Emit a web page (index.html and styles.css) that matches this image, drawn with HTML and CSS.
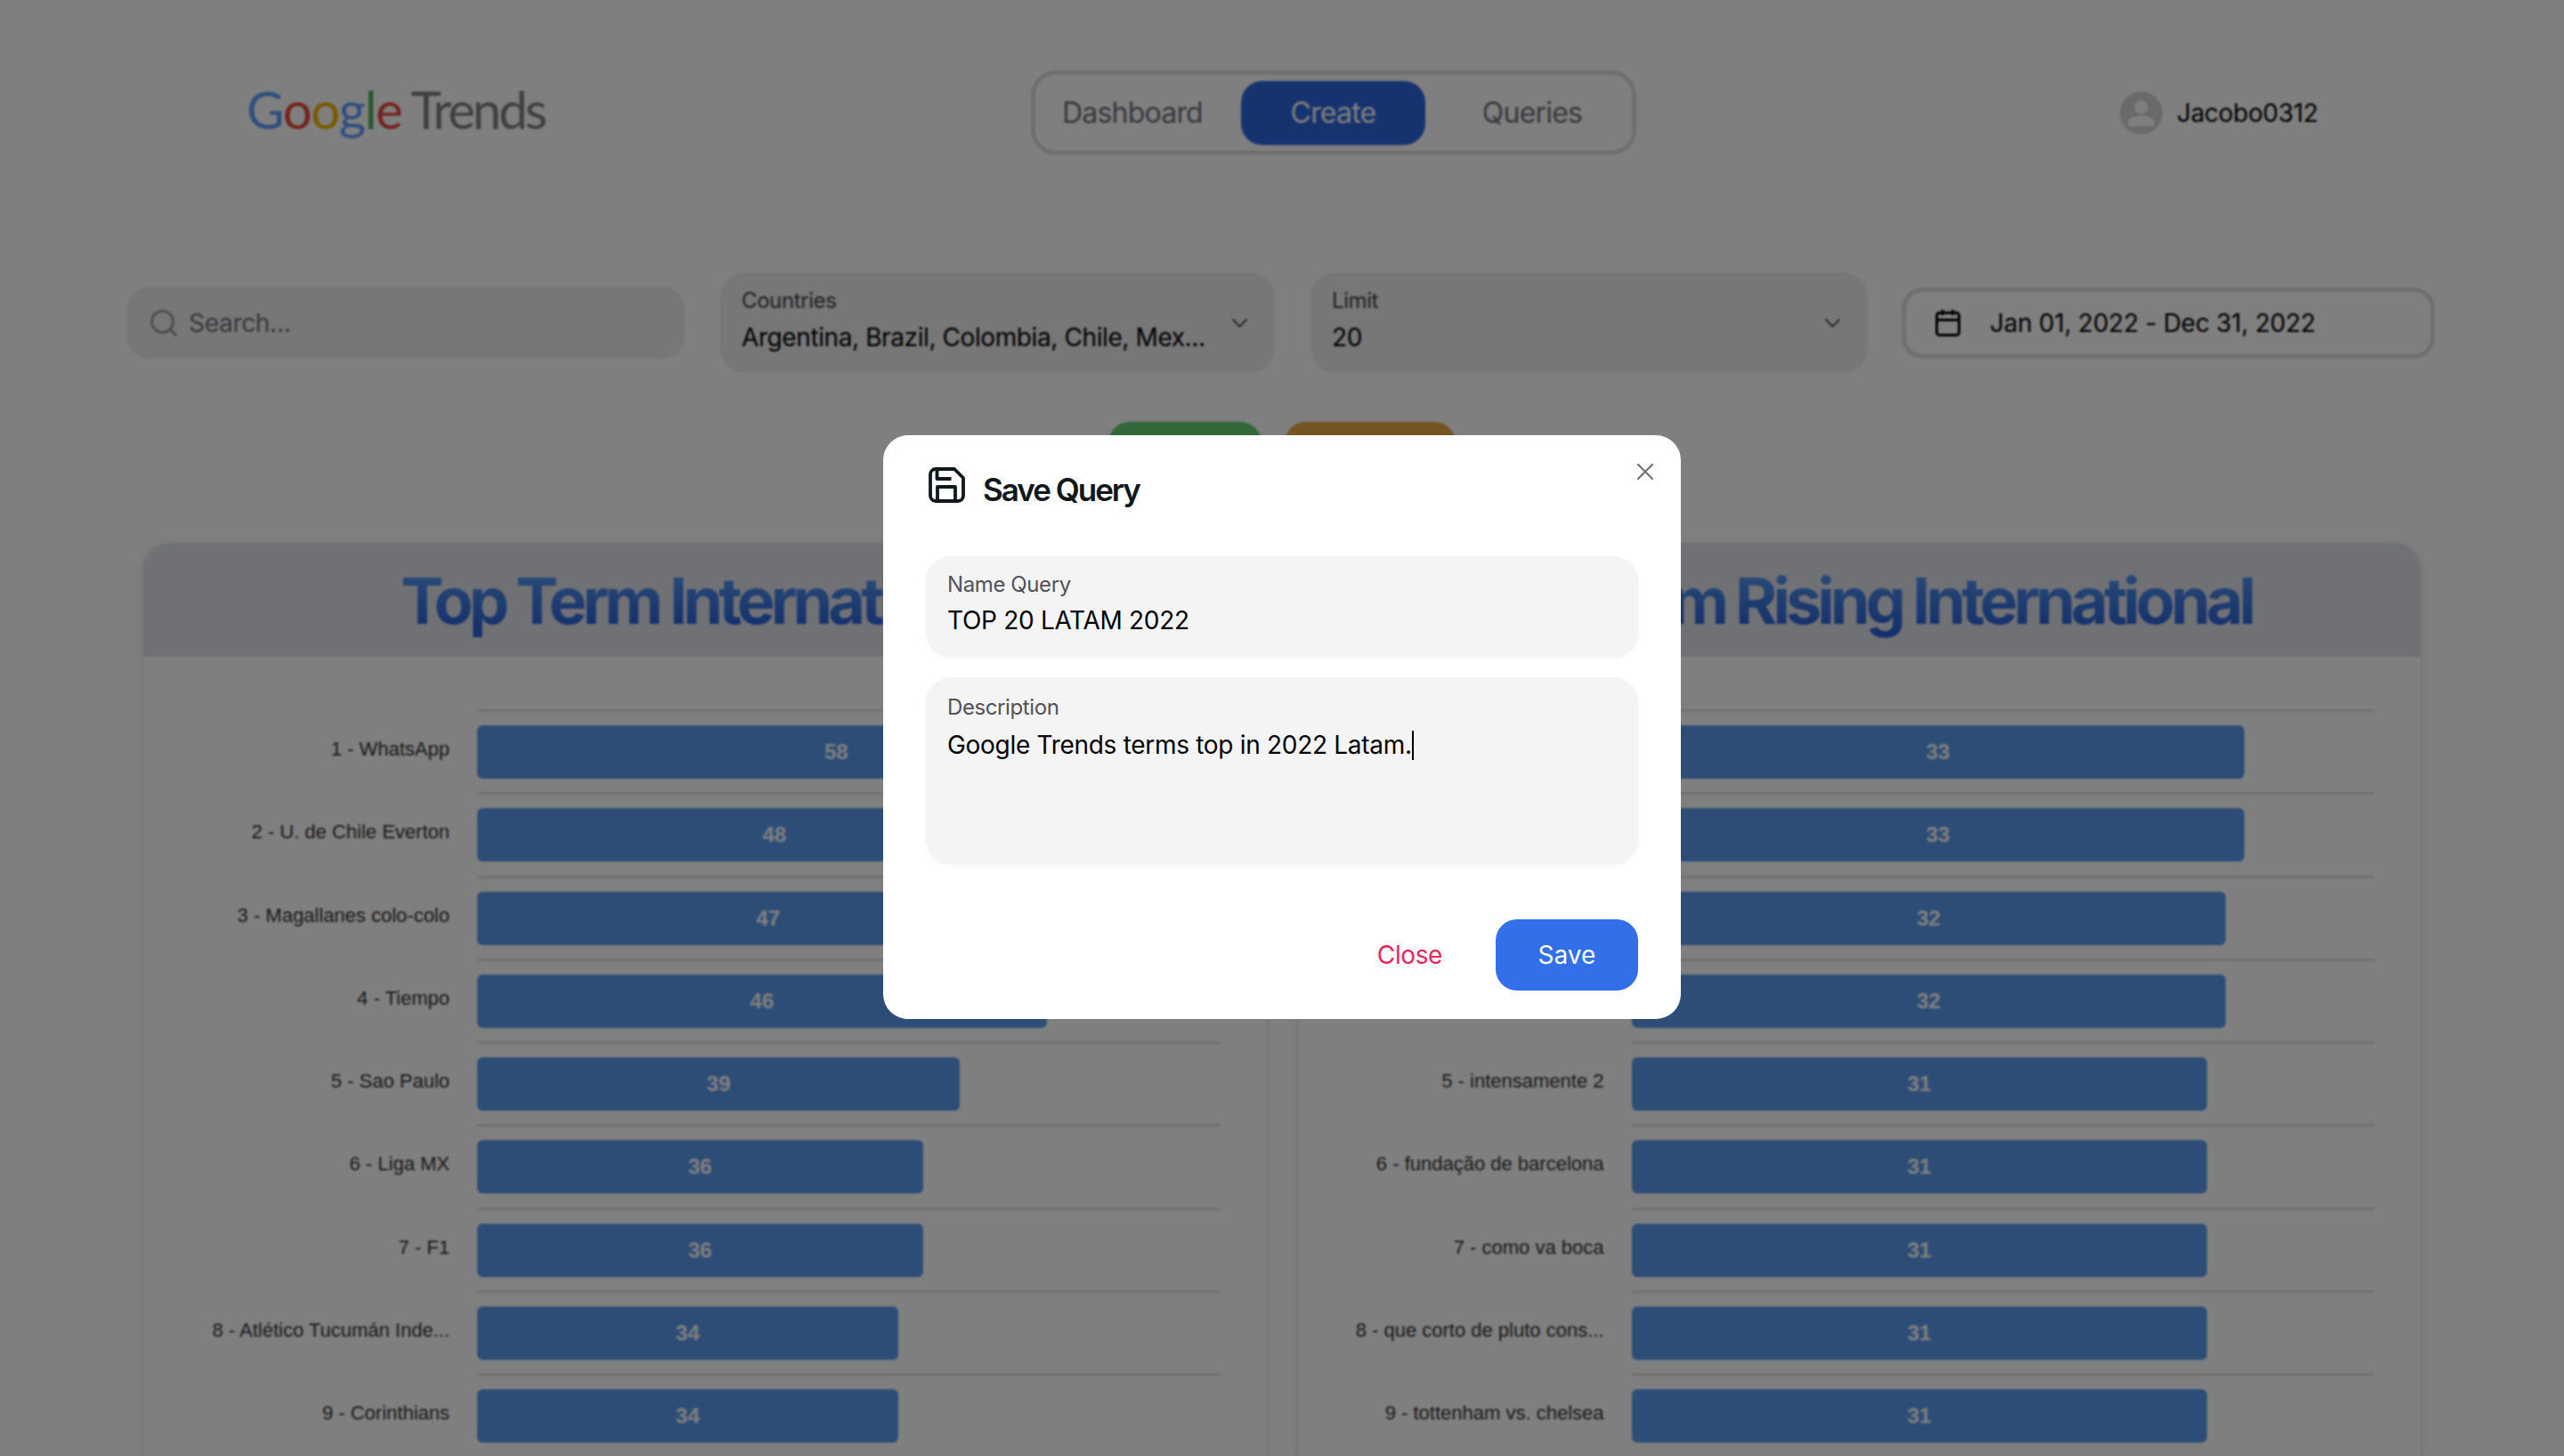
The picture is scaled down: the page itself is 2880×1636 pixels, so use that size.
FILE: index.html
```html
<!DOCTYPE html>
<html>

<head>
    <meta charset="UTF-8">
    <meta name="viewport" content="width=device-width, initial-scale=1.0">
    <title>Google Trends - Create</title>
    <link rel="stylesheet" href="styles.css">
</head>

<body>
    <header class="topbar">
        <div class="logo">
            <span class="logo-google"><span class="g-blue">G</span><span class="g-red">o</span><span class="g-yellow">o</span><span class="g-blue">g</span><span class="g-green">l</span><span class="g-red">e</span></span>
            <span class="logo-trends">Trends</span>
        </div>
        <nav class="tabs">
            <a class="tab tab-dashboard">Dashboard</a>
            <a class="tab tab-active">Create</a>
            <a class="tab tab-queries">Queries</a>
        </nav>
        <div class="user">
            <svg class="avatar" viewBox="0 0 48 48">
                <circle cx="24" cy="24" r="24" fill="#d4d4d8" />
                <circle cx="24" cy="17.5" r="7.5" fill="#fff" />
                <path d="M9 36c0-6 6-9 15-9s15 3 15 9c0 2-1 3-3 3H12c-2 0-3-1-3-3z" fill="#fff" />
            </svg>
            <span class="user-name">Jacobo0312</span>
        </div>
    </header>

    <section class="filters">
        <div class="search">
            <svg class="search-icon" viewBox="0 0 30 30" fill="none" stroke="#94949b" stroke-width="2.6" stroke-linecap="round">
                <circle cx="13.5" cy="13.5" r="12" />
                <path d="M23 23l6 6" />
            </svg>
            <span class="search-text">Search...</span>
        </div>
        <div class="select select-countries">
            <div class="select-body">
                <span class="select-label">Countries</span>
                <span class="select-value">Argentina, Brazil, Colombia, Chile, Mex...</span>
            </div>
            <svg class="chevron" viewBox="0 0 17 10" fill="none" stroke="#11181c" stroke-width="1.5" stroke-linecap="round" stroke-linejoin="round">
                <path d="M1 1l7.5 8L16 1" />
            </svg>
        </div>
        <div class="select select-limit">
            <div class="select-body">
                <span class="select-label">Limit</span>
                <span class="select-value">20</span>
            </div>
            <svg class="chevron" viewBox="0 0 17 10" fill="none" stroke="#11181c" stroke-width="1.5" stroke-linecap="round" stroke-linejoin="round">
                <path d="M1 1l7.5 8L16 1" />
            </svg>
        </div>
        <div class="date">
            <svg class="date-icon" viewBox="0 0 28 30" fill="none" stroke="#000" stroke-width="3" stroke-linecap="round" stroke-linejoin="round">
                <rect x="1.5" y="3.5" width="25" height="25" rx="3" />
                <path d="M1.5 11.5h25M8 1v4M19.5 1v4" />
            </svg>
            <span class="date-text">Jan 01, 2022 - Dec 31, 2022</span>
        </div>
    </section>

    <section class="actions">
        <div class="action action-green"></div>
        <div class="action action-orange"></div>
    </section>

    <main class="cards">
        <section class="card">
            <h2 class="card-title">Top Term International</h2>
            <div class="chart">
                <div class="row"><span class="row-label">1 - WhatsApp</span><div class="plot"><div class="bar" style="width: 96.67%">58</div></div></div>
                <div class="row"><span class="row-label">2 - U. de Chile Everton</span><div class="plot"><div class="bar" style="width: 80%">48</div></div></div>
                <div class="row"><span class="row-label">3 - Magallanes colo-colo</span><div class="plot"><div class="bar" style="width: 78.33%">47</div></div></div>
                <div class="row"><span class="row-label">4 - Tiempo</span><div class="plot"><div class="bar" style="width: 76.67%">46</div></div></div>
                <div class="row"><span class="row-label">5 - Sao Paulo</span><div class="plot"><div class="bar" style="width: 65%">39</div></div></div>
                <div class="row"><span class="row-label">6 - Liga MX</span><div class="plot"><div class="bar" style="width: 60%">36</div></div></div>
                <div class="row"><span class="row-label">7 - F1</span><div class="plot"><div class="bar" style="width: 60%">36</div></div></div>
                <div class="row"><span class="row-label">8 - Atlético Tucumán Inde...</span><div class="plot"><div class="bar" style="width: 56.67%">34</div></div></div>
                <div class="row"><span class="row-label">9 - Corinthians</span><div class="plot"><div class="bar" style="width: 56.67%">34</div></div></div>
            </div>
        </section>
        <section class="card">
            <h2 class="card-title">Top Term Rising International</h2>
            <div class="chart">
                <div class="row"><span class="row-label"></span><div class="plot"><div class="bar" style="width: 82.5%">33</div></div></div>
                <div class="row"><span class="row-label"></span><div class="plot"><div class="bar" style="width: 82.5%">33</div></div></div>
                <div class="row"><span class="row-label"></span><div class="plot"><div class="bar" style="width: 80%">32</div></div></div>
                <div class="row"><span class="row-label"></span><div class="plot"><div class="bar" style="width: 80%">32</div></div></div>
                <div class="row"><span class="row-label">5 - intensamente 2</span><div class="plot"><div class="bar" style="width: 77.5%">31</div></div></div>
                <div class="row"><span class="row-label">6 - fundação de barcelona</span><div class="plot"><div class="bar" style="width: 77.5%">31</div></div></div>
                <div class="row"><span class="row-label">7 - como va boca</span><div class="plot"><div class="bar" style="width: 77.5%">31</div></div></div>
                <div class="row"><span class="row-label">8 - que corto de pluto cons...</span><div class="plot"><div class="bar" style="width: 77.5%">31</div></div></div>
                <div class="row"><span class="row-label">9 - tottenham vs. chelsea</span><div class="plot"><div class="bar" style="width: 77.5%">31</div></div></div>
            </div>
        </section>
    </main>

    <div class="overlay">
        <div class="modal">
            <svg class="modal-close" viewBox="0 0 20 20" fill="none" stroke="#71717a" stroke-width="2.2" stroke-linecap="round">
                <path d="M2 2l16 16M18 2L2 18" />
            </svg>
            <div class="modal-header">
                <svg class="save-icon" viewBox="0 0 41 40" fill="none" stroke="#11181c" stroke-width="3.8" stroke-linejoin="round">
                    <path d="M2 8a6 6 0 0 1 6-6h21l10 10v20a6 6 0 0 1-6 6H8a6 6 0 0 1-6-6z" />
                    <path d="M9.500 2v11h16M10 38V22h20v16" />
                </svg>
                <h3 class="modal-title">Save Query</h3>
            </div>
            <div class="field field-name">
                <span class="field-label">Name Query</span>
                <span class="field-value">TOP 20 LATAM 2022</span>
            </div>
            <div class="field field-description">
                <span class="field-label">Description</span>
                <span class="field-value">Google Trends terms top in 2022 Latam.<span class="caret"></span></span>
            </div>
            <div class="modal-footer">
                <a class="btn-close">Close</a>
                <a class="btn-save">Save</a>
            </div>
        </div>
    </div>
</body>

</html>
```

FILE: styles.css
```css
* {
    box-sizing: border-box;
}

body {
    font-family: 'Inter', sans-serif;
    background-color: #fff;
    color: #11181c;
    margin: 0;
    height: 100vh;
    overflow: hidden;
}

/* top bar */
.topbar {
    display: flex;
    align-items: center;
    padding: 79px 0 0 277px;
}

.logo {
    width: 881px;
    height: 95px;
    display: flex;
    align-items: baseline;
    gap: 10px;
    font-family: 'Lato', sans-serif;
    font-size: 58px;
    line-height: 88px;
}

.logo-google {
    letter-spacing: -1.3px;
}

.g-blue { color: #5f9dff; }
.g-red { color: #e8453c; }
.g-yellow { color: #f4b400; }
.g-green { color: #4cae54; }

.logo-trends {
    color: #808080;
    letter-spacing: -3px;
}

.tabs {
    width: 680px;
    height: 95px;
    border: 5px solid #dedee1;
    border-radius: 28px;
    display: flex;
    align-items: center;
    padding-left: 8px;
    font-size: 32px;
    letter-spacing: -0.8px;
    color: #71717a;
}

.tab {
    text-align: center;
}

.tab-dashboard {
    width: 223px;
    padding-right: 21px;
}

.tab-active {
    width: 207px;
    height: 72px;
    line-height: 72px;
    border-radius: 24px;
    background-color: #2e66de;
    color: #fff;
}

.tab-queries {
    width: 232px;
    padding-left: 8px;
}

.user {
    margin-left: 543px;
    display: flex;
    align-items: center;
    gap: 16px;
}

.avatar {
    width: 48px;
    height: 48px;
}

.user-name {
    font-size: 28px;
    letter-spacing: -0.3px;
    color: #000;
}

/* filters */
.filters {
    margin-top: 132px;
    padding: 0 145px 0 143px;
    display: flex;
    align-items: center;
    gap: 40px;
}

.search {
    width: 626px;
    height: 81px;
    border-radius: 24px;
    background-color: #eeeeef;
    display: flex;
    align-items: center;
    gap: 13px;
    padding-left: 26px;
}

.search-icon {
    width: 30px;
    height: 30px;
}

.search-text {
    font-size: 28px;
    letter-spacing: -0.3px;
    color: #71717a;
}

.select {
    height: 113px;
    border-radius: 28px;
    background-color: #eeeeef;
    display: flex;
    align-items: center;
    justify-content: space-between;
    padding: 0 31px 0 24px;
}

.select-countries {
    width: 623px;
}

.select-limit {
    width: 626px;
}

.select-body {
    display: flex;
    flex-direction: column;
    gap: 8px;
    margin-top: -5px;
}

.select-label {
    font-size: 24px;
    line-height: 30px;
    letter-spacing: -0.4px;
    color: #3f3f46;
}

.select-value {
    font-size: 28px;
    line-height: 36px;
    letter-spacing: -0.4px;
    color: #000;
}

.chevron {
    width: 17px;
    height: 10px;
}

.date {
    width: 599px;
    height: 80px;
    margin-left: -2px;
    border: 5px solid #dedee1;
    border-radius: 24px;
    display: flex;
    align-items: center;
    gap: 33px;
    padding-left: 33px;
}

.date-icon {
    width: 28px;
    height: 30px;
}

.date-text {
    font-size: 28px;
    letter-spacing: -0.25px;
    color: #000;
}

/* buttons hidden behind the modal */
.actions {
    margin-top: 55px;
    display: flex;
    justify-content: center;
    gap: 26px;
}

.action {
    height: 80px;
    border-radius: 24px;
}

.action-green {
    width: 172px;
    background-color: #62ce72;
}

.action-orange {
    width: 192px;
    background-color: #e9a844;
}

/* charts */
.cards {
    margin-top: 55px;
    padding: 0 159px;
    display: grid;
    grid-template-columns: 1fr 1fr;
    gap: 31px;
}

.card {
    border: 2px solid #ececec;
    border-radius: 32px 32px 0 0;
    overflow: hidden;
    box-shadow: 0 0 12px rgba(0, 0, 0, 0.06);
}

.card-title {
    margin: 0;
    height: 127px;
    text-align: center;
    font-size: 72px;
    line-height: 127px;
    font-weight: 650;
    letter-spacing: -5px;
    background-image: linear-gradient(180deg, #4f90ea 30%, #2a60d8 75%), linear-gradient(#e0e2ea, #e0e2ea);
    -webkit-background-clip: text, border-box;
    background-clip: text, border-box;
    color: transparent;
}

.chart {
    padding: 59px 52px 0 28px;
}

.row {
    display: grid;
    grid-template-columns: 316px 1fr;
    column-gap: 31px;
    height: 93.25px;
}

.row-label {
    font-family: 'Liberation Sans', sans-serif;
    font-size: 22px;
    line-height: 26px;
    padding-top: 32px;
    text-align: right;
    color: #333;
    white-space: nowrap;
}

.plot {
    border-top: 3px solid #e2e2e2;
    padding-top: 15px;
}

.bar {
    height: 60px;
    border-radius: 6px;
    background-color: #5b9bee;
    color: #fff;
    font-family: 'Liberation Sans', sans-serif;
    font-weight: bold;
    font-size: 24px;
    display: flex;
    align-items: center;
    justify-content: center;
}

/* modal */
.overlay {
    position: fixed;
    top: 0;
    left: 0;
    right: 0;
    bottom: 0;
    padding-bottom: 2px;
    background-color: rgba(0, 0, 0, 0.5);
    backdrop-filter: blur(1px);
    display: flex;
    align-items: center;
    justify-content: center;
}

.modal {
    position: relative;
    width: 896px;
    background-color: #fff;
    border-radius: 28px;
    padding: 0 48px 32px;
}

.modal-close {
    position: absolute;
    top: 31px;
    right: 30px;
    width: 20px;
    height: 20px;
}

.modal-header {
    height: 136px;
    display: flex;
    align-items: flex-start;
    gap: 20px;
    padding: 36px 0 0 3px;
}

.save-icon {
    width: 41px;
    height: 40px;
}

.modal-title {
    margin: 0;
    font-size: 35px;
    line-height: 50px;
    font-weight: 600;
    letter-spacing: -2px;
}

.field {
    display: flex;
    flex-direction: column;
    border-radius: 28px;
    background-color: #f4f4f5;
    padding: 18px 24px 0;
    box-shadow: 0 2px 4px rgba(0, 0, 0, 0.04);
}

.field-name {
    height: 113px;
}

.field-description {
    height: 210px;
    margin-top: 23px;
    padding-top: 20px;
}

.field-label {
    font-size: 24px;
    line-height: 28px;
    letter-spacing: -0.4px;
    color: #52525b;
}

.field-value {
    font-size: 28px;
    line-height: 40px;
    letter-spacing: -0.3px;
    color: #000;
    margin-top: 6px;
}

.field-description .field-value {
    margin-top: 8px;
}

.caret {
    display: inline-block;
    width: 2px;
    height: 33px;
    background-color: #000;
    vertical-align: -7px;
}

.modal-footer {
    margin-top: 62px;
    display: flex;
    align-items: center;
    justify-content: flex-end;
    gap: 60px;
    font-size: 28px;
}

.btn-close {
    color: #e8265e;
    letter-spacing: -0.4px;
}

.btn-save {
    width: 160px;
    height: 80px;
    line-height: 80px;
    text-align: center;
    border-radius: 24px;
    background-color: #336fe8;
    color: #fff;
}
```
